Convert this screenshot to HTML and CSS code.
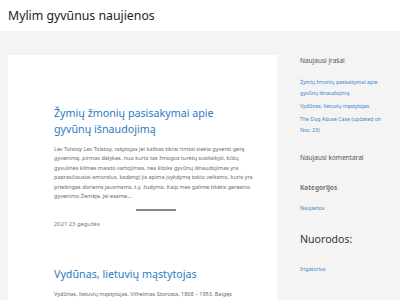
FILE: index.html
```html
<!DOCTYPE html>
<html lang="lt">

<head>
    <meta charset="UTF-8">
    <meta name="viewport" content="width=device-width, initial-scale=1.0">
    <title>Mylim gyvūnus naujienos</title>
    <link rel="stylesheet" href="styles.css">
</head>

<body>
    <header class="site-header">
        <div class="site-title">Mylim gyvūnus naujienos</div>
    </header>

    <div class="site-main">
        <!-- Posts -->
        <main class="posts">
            <article class="post">
                <h2 class="post-title"><a href="#">Žymių žmonių pasisakymai apie gyvūnų išnaudojimą</a></h2>
                <p class="post-excerpt">Lev Tolstoy Lev Tolstoy, rašytojas Jei kažkas tikrai rimtai siekia gyventi gerą gyvenimą, pirmas dalykas, nuo kurio tas žmogus turėtų susilaikyti, būtų gyvulinės kilmės maisto vartojimas, nes šitoks gyvūnų išnaudojimas yra paprasčiausiai amoralus, kadangi jis apima įvykdymą tokio veiksmo, kuris yra priešingas doriems jausmams, t.y. žudymo. Kaip mes galime tikėtis geresnio gyvenimo Žemėje, jei esame...</p>
                <hr class="post-sep">
                <div class="post-date">2021 23 gegužės</div>
            </article>

            <article class="post">
                <h2 class="post-title"><a href="#">Vydūnas, lietuvių mąstytojas</a></h2>
                <p class="post-excerpt narrow">Vydūnas, lietuvių mąstytojas, Vilhelmas Storosta, 1868 – 1953. Baigęs mokytojų seminariją, dirbo mokytoju, vėliau studijavo filosofiją...</p>
            </article>
        </main>

        <!-- Sidebar -->
        <aside class="sidebar">
            <section class="widget">
                <h3 class="widget-title">Naujausi įrašai</h3>
                <ul class="widget-list">
                    <li><a href="#">Žymių žmonių pasisakymai apie gyvūnų išnaudojimą</a></li>
                    <li><a href="#">Vydūnas, lietuvių mąstytojas</a></li>
                    <li><a href="#">The Dog Abuse Case (updated on Nov. 23)</a></li>
                </ul>
            </section>

            <section class="widget empty">
                <h3 class="widget-title">Naujausi komentarai</h3>
            </section>

            <section class="widget">
                <h3 class="widget-title bold">Kategorijos</h3>
                <ul class="widget-list">
                    <li><a href="#">Naujienos</a></li>
                </ul>
            </section>

            <section class="widget">
                <h3 class="widget-title big">Nuorodos:</h3>
                <ul class="widget-list">
                    <li><a href="#">Irigatorius</a></li>
                </ul>
            </section>
        </aside>
    </div>
</body>

</html>
```

FILE: styles.css
```css
body {
    margin: 0;
    font-family: "Noto Sans", "Open Sans", sans-serif;
    background-color: #f4f4f4;
    color: #666;
}

a {
    text-decoration: none;
}

.site-header {
    background: #fff;
    height: 31px;
    padding-left: 8px;
}

.site-title {
    font-size: 12.3px;
    line-height: 31px;
    color: #222;
}

.site-main {
    display: flex;
    align-items: flex-start;
    padding: 24px 0 0 8px;
}

.posts {
    width: 269px;
    min-height: 260px;
    background: #fff;
    padding: 50px 19px 0 46px;
    box-sizing: border-box;
}

.post {
    margin-bottom: 37px;
}

.post-title {
    max-width: 180px;
    margin: 0;
    font-size: 10.7px;
    font-weight: normal;
    line-height: 16px;
}

.post-title a {
    color: #2b7bbf;
}

.post-excerpt {
    margin: 8px 0 0;
    font-size: 5.5px;
    line-height: 9.4px;
    color: #6a6a6a;
}

.post-excerpt.narrow {
    max-width: 182px;
}

.post-sep {
    width: 40px;
    height: 2px;
    margin: 8px auto 0;
    border: none;
    background: #888;
}

.post-date {
    margin-top: 7.5px;
    font-size: 5.8px;
    line-height: 10px;
    color: #777;
}

.sidebar {
    width: 86px;
    margin-left: 23px;
    padding-top: 1px;
    display: flex;
    flex-direction: column;
    gap: 15px;
}

.widget.empty {
    padding-bottom: 5px;
}

.widget-title {
    margin: 0;
    font-size: 6.5px;
    font-weight: normal;
    line-height: 10px;
    color: #555;
}

.widget-title.bold {
    font-weight: bold;
    color: #777;
}

.widget-title.big {
    font-size: 10.6px;
    line-height: 16px;
    color: #333;
}

.widget-list {
    list-style: none;
    margin: 10.5px 0 0;
    padding: 0;
}

.big + .widget-list {
    margin-top: 16.5px;
}

.widget-list li {
    font-size: 5.2px;
    line-height: 11px;
    margin-bottom: 2px;
}

.widget-list a {
    color: #3a87c8;
}
```
